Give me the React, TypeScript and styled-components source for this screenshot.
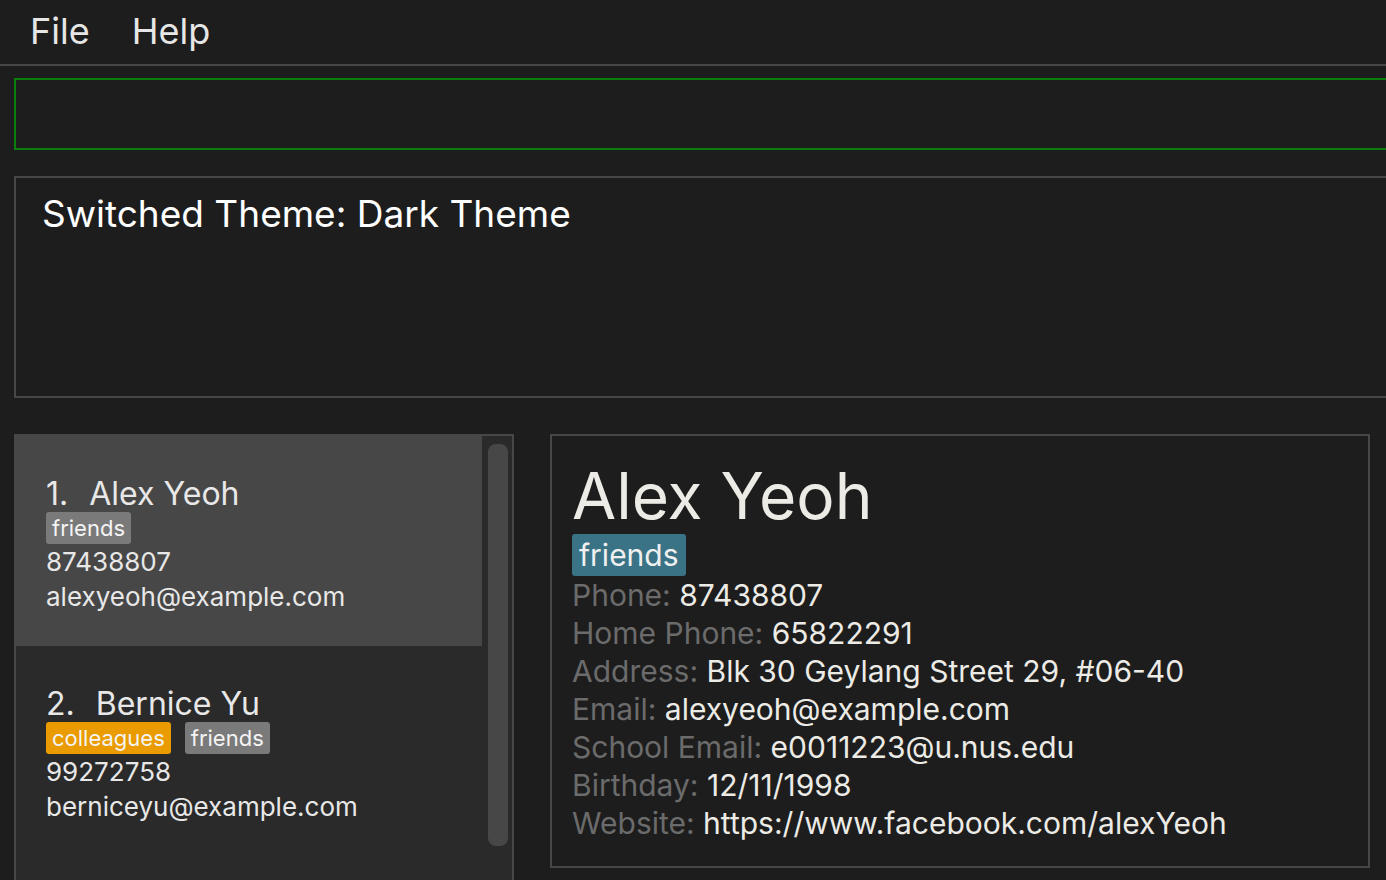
import React from "react";
import styled, { createGlobalStyle } from "styled-components";

const GlobalStyle = createGlobalStyle`
  html, body {
    margin: 0;
    padding: 0;
    background: #1d1d1d;
    overflow: hidden;
  }
  body {
    font-family: Inter, "Open Sans", "Liberation Sans", sans-serif;
    color: #e8e8e8;
  }
  * { box-sizing: border-box; }
`;

const Page = styled.div`
  width: 1386px;
  height: 880px;
  overflow: hidden;
  background: #1d1d1d;
  display: flex;
  flex-direction: column;
`;

const MenuBar = styled.div`
  flex-shrink: 0;
  height: 66px;
  display: flex;
  align-items: flex-start;
  gap: 42px;
  padding-left: 30px;
  border-bottom: 2px solid #474747;
`;

const MenuItem = styled.span`
  font-size: 36px;
  line-height: 62px;
  color: #e6e6e6;
`;

const Main = styled.div`
  flex-shrink: 0;
  padding: 12px 0 0 14px;
  display: flex;
  flex-direction: column;
`;

const CommandBox = styled.div`
  height: 72px;
  border: 2px solid #0a7d0a;
  border-right: none;
`;

const ResultBox = styled.div`
  margin-top: 26px;
  height: 222px;
  border: 2px solid #474747;
  border-right: none;
  padding: 14px 0 0 26px;
  font-size: 37px;
  line-height: 43px;
  color: #ffffff;
`;

const Lower = styled.div`
  margin-top: 36px;
  display: flex;
  gap: 36px;
  align-items: flex-start;
`;

const ListPanel = styled.div`
  flex-shrink: 0;
  width: 500px;
  height: 470px;
  border: 2px solid #474747;
  display: flex;
  background: #2a2a2a;
`;

const Cards = styled.div`
  width: 466px;
  display: flex;
  flex-direction: column;
`;

const Card = styled.div<{ $selected?: boolean }>`
  height: 210px;
  padding: 40px 0 0 30px;
  background: ${(p) => (p.$selected ? "#474747" : "#2a2a2a")};
  color: #e8e8e8;
`;

const CardName = styled.div`
  display: flex;
  gap: 21px;
  font-size: 32px;
  line-height: 36px;
`;

const TagRow = styled.div`
  display: flex;
  gap: 14px;
`;

const Tag = styled.span<{ $color: string }>`
  display: inline-flex;
  align-items: center;
  height: 32px;
  padding: 0 6px;
  border-radius: 3px;
  font-size: 22px;
  color: #f4f4f4;
  background: ${(p) => p.$color};
`;

const CardLine = styled.div`
  font-size: 26px;
  line-height: 35px;
`;

const ScrollTrack = styled.div`
  flex: 1;
  padding: 8px 4px 0 6px;
  background: #2a2a2a;
`;

const ScrollThumb = styled.div`
  height: 402px;
  border-radius: 8px;
  background: #474747;
`;

const DetailPanel = styled.div`
  flex-shrink: 0;
  width: 820px;
  height: 434px;
  border: 2px solid #474747;
  padding: 24px 0 0 20px;
`;

const DetailName = styled.div`
  font-size: 64px;
  line-height: 72px;
  color: #ecebe6;
`;

const DetailTag = styled.span`
  display: inline-flex;
  align-items: center;
  margin-top: 2px;
  height: 42px;
  padding: 0 7px;
  border-radius: 3px;
  font-size: 30px;
  color: #f0f0f0;
  background: #3a7386;
`;

const Field = styled.div`
  font-size: 30px;
  line-height: 38px;
  color: #ecebe6;
  white-space: nowrap;
`;

const Label = styled.span`
  color: #6b6b6b;
`;

const fields: [string, string][] = [
  ["Phone", "87438807"],
  ["Home Phone", "65822291"],
  ["Address", "Blk 30 Geylang Street 29, #06-40"],
  ["Email", "alexyeoh@example.com"],
  ["School Email", "e0011223@u.nus.edu"],
  ["Birthday", "12/11/1998"],
  ["Website", "https://www.facebook.com/alexYeoh"],
];

export default function App() {
  return (
    <Page>
      <GlobalStyle />
      <MenuBar>
        <MenuItem>File</MenuItem>
        <MenuItem>Help</MenuItem>
      </MenuBar>
      <Main>
        <CommandBox />
        <ResultBox>Switched Theme: Dark Theme</ResultBox>
        <Lower>
          <ListPanel>
            <Cards>
              <Card $selected>
                <CardName>
                  <span>1.</span>
                  <span>Alex Yeoh</span>
                </CardName>
                <TagRow>
                  <Tag $color="#7a7a7a">friends</Tag>
                </TagRow>
                <CardLine>87438807</CardLine>
                <CardLine>alexyeoh@example.com</CardLine>
              </Card>
              <Card>
                <CardName>
                  <span>2.</span>
                  <span>Bernice Yu</span>
                </CardName>
                <TagRow>
                  <Tag $color="#e99b00">colleagues</Tag>
                  <Tag $color="#7a7a7a">friends</Tag>
                </TagRow>
                <CardLine>99272758</CardLine>
                <CardLine>berniceyu@example.com</CardLine>
              </Card>
            </Cards>
            <ScrollTrack>
              <ScrollThumb />
            </ScrollTrack>
          </ListPanel>
          <DetailPanel>
            <DetailName>Alex Yeoh</DetailName>
            <DetailTag>friends</DetailTag>
            {fields.map(([k, v]) => (
              <Field key={k}>
                <Label>{k}: </Label>
                {v}
              </Field>
            ))}
          </DetailPanel>
        </Lower>
      </Main>
    </Page>
  );
}
